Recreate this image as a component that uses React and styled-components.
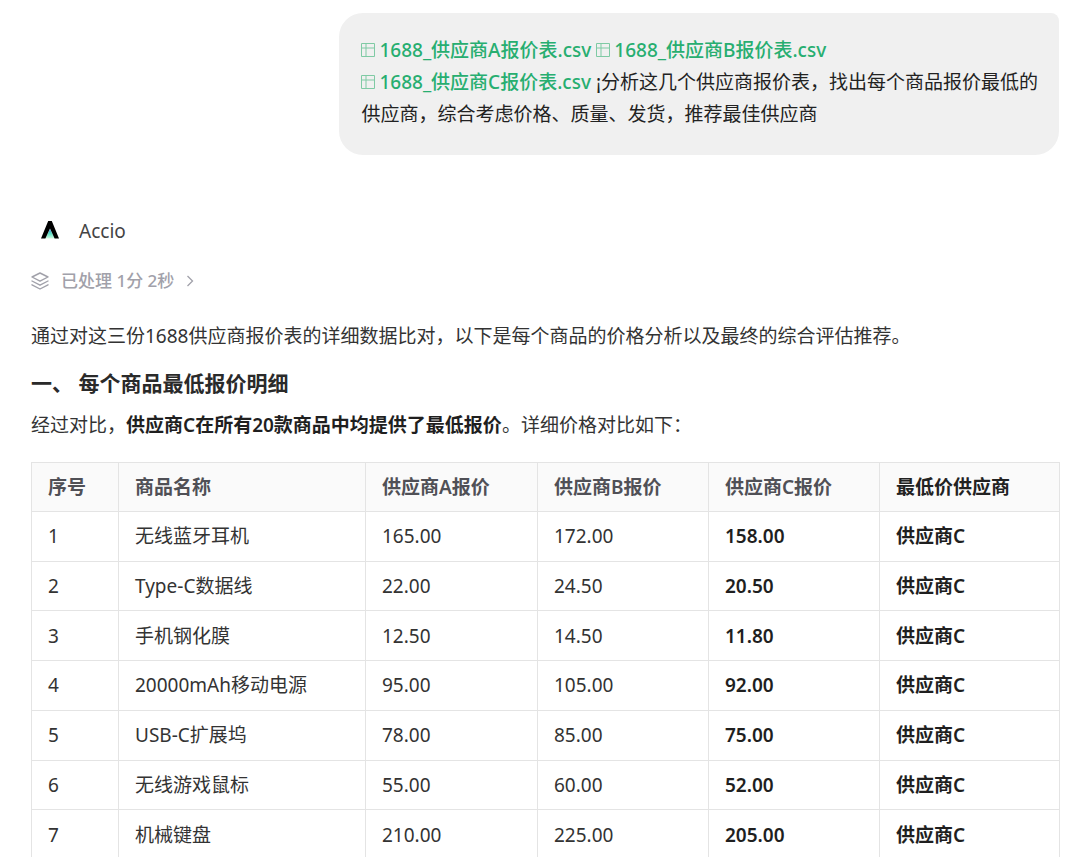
import React from 'react';
import styled, { createGlobalStyle } from 'styled-components';

const files = ['1688_供应商A报价表.csv', '1688_供应商B报价表.csv', '1688_供应商C报价表.csv'];

const columns = [
  { title: '序号', width: 87 },
  { title: '商品名称', width: 247 },
  { title: '供应商A报价', width: 172 },
  { title: '供应商B报价', width: 171 },
  { title: '供应商C报价', width: 171 },
  { title: '最低价供应商', width: 180, best: true },
];

const products = [
  { name: '无线蓝牙耳机', a: '165.00', b: '172.00', c: '158.00' },
  { name: 'Type-C数据线', a: '22.00', b: '24.50', c: '20.50' },
  { name: '手机钢化膜', a: '12.50', b: '14.50', c: '11.80' },
  { name: '20000mAh移动电源', a: '95.00', b: '105.00', c: '92.00' },
  { name: 'USB-C扩展坞', a: '78.00', b: '85.00', c: '75.00' },
  { name: '无线游戏鼠标', a: '55.00', b: '60.00', c: '52.00' },
  { name: '机械键盘', a: '210.00', b: '225.00', c: '205.00' },
];

function SheetIcon() {
  return (
    <svg width="14" height="14" viewBox="0 0 14 14" fill="none" stroke="#7fcaa4" aria-hidden="true">
      <path d="M.5 .5h13v13H.5zM5 .5v13M.5 5h13" />
    </svg>
  );
}

function AccioLogo() {
  return (
    <svg width="18" height="20" viewBox="0 0 18 20" aria-hidden="true">
      <defs>
        <linearGradient id="glow" x1="0" y1="0" x2="0" y2="1">
          <stop offset="0" stopColor="#2f9be8" />
          <stop offset="0.5" stopColor="#5fe3c4" />
          <stop offset="1" stopColor="#d6fbe2" />
        </linearGradient>
      </defs>
      <path d="M9 8l4.5 9.5h-9z" fill="url(#glow)" />
      <path d="M7.2 0h3.6L18 17.5h-4.4L9 7.5l-4.6 10H0z" fill="#000" />
    </svg>
  );
}

function LayersIcon() {
  return (
    <svg
      width="18"
      height="18"
      viewBox="0 0 18 18"
      fill="none"
      stroke="currentColor"
      strokeWidth="1.4"
      strokeLinejoin="round"
      strokeLinecap="round"
      aria-hidden="true"
    >
      <path d="M9 1l8 4-8 4.2L1 5z" />
      <path d="M1 9l8 4.2L17 9" />
      <path d="M1 12.8L9 17l8-4.2" />
    </svg>
  );
}

function ArrowIcon() {
  return (
    <svg width="8" height="12" viewBox="0 0 8 12" fill="none" stroke="currentColor" strokeWidth="1.3" aria-hidden="true">
      <path d="M1.5 1l5 5-5 5" />
    </svg>
  );
}

function App() {
  return (
    <>
      <GlobalStyle />
      <Chat>
        <Bubble>
          {files.map((file) => (
            <React.Fragment key={file}>
              <FileLink href="#">
                <SheetIcon />
                {file}
              </FileLink>{' '}
            </React.Fragment>
          ))}
          ¡分析这几个供应商报价表，找出每个商品报价最低的供应商，综合考虑价格、质量、发货，推荐最佳供应商
        </Bubble>
        <Sender>
          <AccioLogo />
          Accio
        </Sender>
        <Status type="button">
          <LayersIcon />
          已处理 1分 2秒
          <ArrowIcon />
        </Status>
        <Paragraph>通过对这三份1688供应商报价表的详细数据比对，以下是每个商品的价格分析以及最终的综合评估推荐。</Paragraph>
        <Heading>一、 每个商品最低报价明细</Heading>
        <Paragraph>
          经过对比，<strong>供应商C在所有20款商品中均提供了最低报价</strong>。详细价格对比如下：
        </Paragraph>
        <Table>
          <colgroup>
            {columns.map((column) => (
              <Col key={column.title} $width={column.width} />
            ))}
          </colgroup>
          <thead>
            <tr>
              {columns.map((column) => (
                <HeadCell key={column.title} scope="col" $best={column.best}>
                  {column.title}
                </HeadCell>
              ))}
            </tr>
          </thead>
          <tbody>
            {products.map((product, index) => (
              <tr key={product.name}>
                <Cell>{index + 1}</Cell>
                <Cell>{product.name}</Cell>
                <Cell>{product.a}</Cell>
                <Cell>{product.b}</Cell>
                <Cell $best>{product.c}</Cell>
                <Cell $best>供应商C</Cell>
              </tr>
            ))}
          </tbody>
        </Table>
      </Chat>
    </>
  );
}

const GlobalStyle = createGlobalStyle`
  * {
    box-sizing: border-box;
  }
  body {
    margin: 0;
    background: #fff;
    color: #333;
    font-family: 'Noto Sans', 'Noto Sans CJK SC', sans-serif;
    font-size: 19px;
    line-height: 32px;
  }
`;

const Chat = styled.main`
  display: flex;
  flex-direction: column;
  align-items: flex-start;
  padding: 13px 21px 0 31px;
`;

const Bubble = styled.div`
  align-self: flex-end;
  width: 70%;
  padding: 21px 16px 25px 22px;
  border-radius: 24px 8px 24px 24px;
  background: #f0f0f0;
  color: #222;
`;

const FileLink = styled.a`
  color: #27ae70;
  font-weight: 500;
  text-decoration: none;
  white-space: nowrap;
  svg {
    margin-right: 4px;
  }
`;

const Sender = styled.div`
  display: flex;
  align-items: center;
  gap: 20px;
  margin-top: 60px;
  padding-left: 10px;
  color: #444;
`;

const Status = styled.button`
  display: flex;
  align-items: center;
  gap: 12px;
  margin: 18px 0 23px;
  padding: 0;
  border: 0;
  background: none;
  color: #a1a1aa;
  font-family: inherit;
  font-size: 17px;
  font-weight: 500;
  line-height: 32px;
  cursor: pointer;
`;

const Paragraph = styled.p`
  margin: 0;
  strong {
    color: #1f1f1f;
    font-weight: 600;
  }
`;

const Heading = styled.h2`
  margin: 15px 0 10px;
  color: #2a2a2a;
  font-size: 21px;
  font-weight: 600;
  line-height: 32px;
`;

const Table = styled.table`
  width: 100%;
  height: 398px;
  margin-top: 21px;
  border-collapse: collapse;
  table-layout: fixed;
`;

const Col = styled.col`
  width: ${(props) => props.$width}px;
`;

const HeadCell = styled.th`
  padding: 8px 16px;
  border: 1px solid #e4e4e4;
  background: #fafafa;
  color: ${(props) => (props.$best ? '#222' : '#505056')};
  font-weight: 600;
  text-align: left;
`;

const Cell = styled.td`
  padding: 8px 16px;
  border: 1px solid #e4e4e4;
  color: ${(props) => (props.$best ? '#1f1f1f' : '#333')};
  font-weight: ${(props) => (props.$best ? 600 : 400)};
`;

export default App;
